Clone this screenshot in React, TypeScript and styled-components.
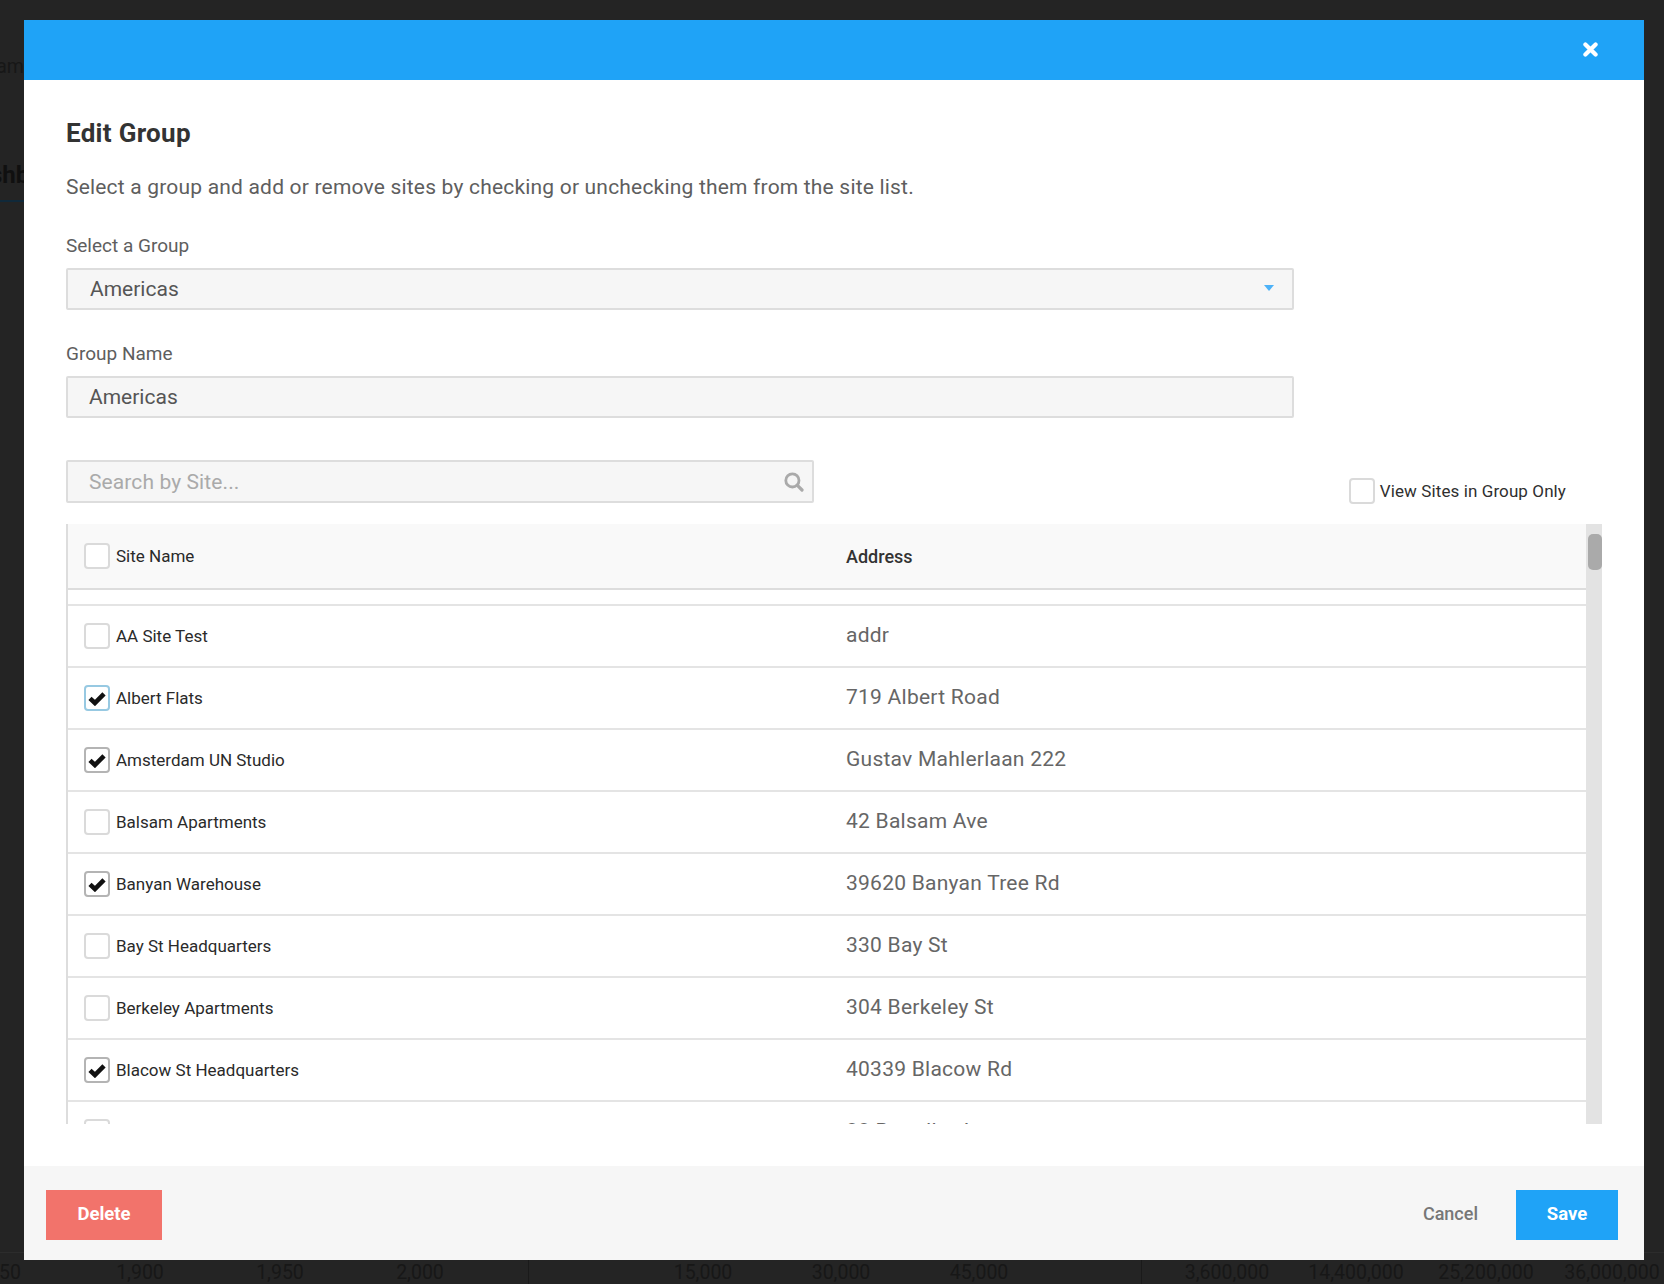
import { FC } from 'react'
import styled, { createGlobalStyle } from 'styled-components'

const GlobalStyle = createGlobalStyle`
  html, body {
    margin: 0;
    padding: 0;
    background: #242424;
    font-family: Roboto, "Liberation Sans", sans-serif;
  }
  * {
    box-sizing: border-box;
  }
`

const Page = styled.div`
  position: relative;
  width: 1664px;
  height: 1284px;
  padding: 20px 20px 24px 24px;
  overflow: hidden;
`

const BackdropText = styled.span<{ $left: number; $top: number; $bold?: boolean }>`
  position: absolute;
  left: ${(p) => p.$left}px;
  top: ${(p) => p.$top}px;
  font-size: ${(p) => (p.$bold ? 24 : 19.5)}px;
  font-weight: ${(p) => (p.$bold ? 700 : 400)};
  line-height: 24px;
  color: ${(p) => (p.$bold ? '#101010' : '#171717')};
  white-space: nowrap;
  transform: ${(p) => (p.$bold ? 'none' : 'translateX(-50%)')};
`

const BackdropLine = styled.div<{ $left: number; $top: number; $w: number; $h: number; $color: string }>`
  position: absolute;
  left: ${(p) => p.$left}px;
  top: ${(p) => p.$top}px;
  width: ${(p) => p.$w}px;
  height: ${(p) => p.$h}px;
  background: ${(p) => p.$color};
`

const Modal = styled.div`
  position: relative;
  display: flex;
  flex-direction: column;
  width: 1620px;
  height: 1240px;
  background: #fff;
`

const Header = styled.div`
  display: flex;
  align-items: center;
  justify-content: flex-end;
  flex: none;
  height: 60px;
  padding: 0 46px 1px 0;
  background: #1fa3f7;
  color: #fff;
`

const Body = styled.div`
  flex: 1;
  padding: 35px 42px 0;
`

const Title = styled.h2`
  margin: 0;
  font-size: 26px;
  line-height: 36px;
  font-weight: 700;
  letter-spacing: 0.3px;
  color: #333;
`

const Description = styled.p`
  margin: 22px 0 0;
  font-size: 21px;
  line-height: 28px;
  letter-spacing: 0.19px;
  color: #5e5e5e;
`

const Label = styled.label`
  display: block;
  font-size: 19px;
  line-height: 24px;
  color: #5e5e5e;
`

const Field = styled.div<{ $gap: number }>`
  width: 1228px;
  margin-top: ${(p) => p.$gap}px;
`

const Control = styled.div<{ $h: number; $inset: number }>`
  display: flex;
  align-items: center;
  justify-content: space-between;
  height: ${(p) => p.$h}px;
  margin-top: 10px;
  padding: 0 18px 0 ${(p) => p.$inset}px;
  background: #f6f6f6;
  border: 2px solid #ddd;
  border-radius: 2px;
  font-size: 21px;
  color: #555;
`

const Caret = styled.span`
  width: 0;
  height: 0;
  margin-top: -2px;
  border-left: 5.5px solid transparent;
  border-right: 5.5px solid transparent;
  border-top: 6px solid #4db2f8;
`

const SearchRow = styled.div`
  display: flex;
  align-items: flex-end;
  justify-content: space-between;
  margin-top: 42px;
  width: 1536px;
`

const SearchBox = styled(Control)`
  width: 748px;
  margin-top: 0;
  color: #aaa;
  padding-right: 8px;
  letter-spacing: 0.1px;
`

const ViewOnly = styled.label`
  display: flex;
  align-items: center;
  gap: 5px;
  margin-right: 36px;
  margin-bottom: -1px;
  font-size: 17px;
  letter-spacing: 0.1px;
  color: #2f2f2f;
`

const Box = styled.span<{ $state?: 'checked' | 'focus' }>`
  display: flex;
  align-items: center;
  justify-content: center;
  flex: none;
  width: 26px;
  height: 26px;
  background: #fff;
  border: 2px solid ${(p) => (p.$state === 'focus' ? '#97c9e2' : p.$state === 'checked' ? '#b4b4b4' : '#dadada')};
  border-radius: 4px;
  color: #111;
`

const TableWrap = styled.div`
  display: flex;
  height: 600px;
  margin-top: 21px;
  width: 1536px;
  overflow: hidden;
`

const Table = styled.div`
  flex: 1;
  border-left: 2px solid #ddd;
  overflow: hidden;
`

const Scrollbar = styled.div`
  flex: none;
  width: 16px;
  padding: 10px 0 0 2px;
  background: #e3e3e3;
`

const Thumb = styled.div`
  height: 36px;
  background: #aaa;
  border-radius: 5px;
`

const HeadRow = styled.div`
  display: grid;
  grid-template-columns: 778px 1fr;
  align-items: center;
  height: 66px;
  background: #f9f9f9;
  border-bottom: 2px solid #ddd;
  color: #2f2f2f;
`

const Spacer = styled.div`
  height: 16px;
  border-bottom: 2px solid #e4e4e4;
`

const Row = styled.div`
  display: grid;
  grid-template-columns: 778px 1fr;
  align-items: center;
  height: 62px;
  border-bottom: 2px solid #e4e4e4;
`

const NameCell = styled.div`
  display: flex;
  align-items: center;
  gap: 6px;
  padding-left: 16px;
  font-size: 17px;
  color: #2a2a2a;
`

const AddressHead = styled.div`
  font-weight: 500;
  font-size: 18px;
  color: #333;
`

const AddressCell = styled.div`
  padding-bottom: 2px;
  font-size: 21px;
  letter-spacing: 0.25px;
  color: #666;
`

const Footer = styled.div`
  display: flex;
  align-items: flex-start;
  flex: none;
  height: 94px;
  padding: 24px 26px 0 22px;
  background: #f6f6f6;
`

const Button = styled.button<{ $color: string; $w: number }>`
  width: ${(p) => p.$w}px;
  height: 50px;
  padding: 0 0 3px;
  border: 0;
  background: ${(p) => p.$color};
  color: #fff;
  font-family: inherit;
  font-size: 18.5px;
  font-weight: 700;
`

const CancelButton = styled.button`
  margin-left: auto;
  margin-right: 38px;
  height: 50px;
  padding: 0 0 3px;
  border: 0;
  background: transparent;
  color: #777;
  font-family: inherit;
  font-size: 18px;
  font-weight: 500;
`

const CloseIcon: FC = () => (
  <svg width="15" height="15" viewBox="0 0 15 15">
    <path d="M2.4 2.4 12.6 12.6M12.6 2.4 2.4 12.6" stroke="currentColor" strokeWidth="4.2" strokeLinecap="round" />
  </svg>
)

const CheckIcon: FC = () => (
  <svg width="18" height="15" viewBox="0 0 18 15">
    <path d="M2 7.4 6.9 12 16 2.8" fill="none" stroke="currentColor" strokeWidth="4.6" strokeLinejoin="miter" />
  </svg>
)

const SearchIcon: FC = () => (
  <svg width="20" height="20" viewBox="0 0 20 20">
    <circle cx="8.4" cy="8.4" r="6.6" fill="none" stroke="#aaa" strokeWidth="2.8" />
    <path d="M13.4 13.4 18 18" stroke="#aaa" strokeWidth="3.2" strokeLinecap="round" />
  </svg>
)

type Site = { name: string; address: string; state?: 'checked' | 'focus' }

const sites: Site[] = [
  { name: 'AA Site Test', address: 'addr' },
  { name: 'Albert Flats', address: '719 Albert Road', state: 'focus' },
  { name: 'Amsterdam UN Studio', address: 'Gustav Mahlerlaan 222', state: 'checked' },
  { name: 'Balsam Apartments', address: '42 Balsam Ave' },
  { name: 'Banyan Warehouse', address: '39620 Banyan Tree Rd', state: 'checked' },
  { name: 'Bay St Headquarters', address: '330 Bay St' },
  { name: 'Berkeley Apartments', address: '304 Berkeley St' },
  { name: 'Blacow St Headquarters', address: '40339 Blacow Rd', state: 'checked' },
  { name: 'Brandley Lofts', address: '88 Brandley Ln' },
]

const ticks: [string, number][] = [
  ['50', 10],
  ['1,900', 140],
  ['1,950', 280],
  ['2,000', 420],
  ['15,000', 703],
  ['30,000', 841],
  ['45,000', 979],
  ['3,600,000', 1227],
  ['14,400,000', 1356],
  ['25,200,000', 1486],
  ['36,000,000', 1612],
]

const Backdrop: FC = () => (
  <>
    <BackdropText $left={10} $top={55}>am</BackdropText>
    <BackdropText $left={-10} $top={163} $bold>shb</BackdropText>
    <BackdropLine $left={0} $top={200} $w={24} $h={2} $color="#10293a" />
    <BackdropLine $left={0} $top={1252} $w={1664} $h={1} $color="#2c2c2c" />
    <BackdropLine $left={528} $top={1252} $w={1} $h={32} $color="#1a1a1a" />
    <BackdropLine $left={1141} $top={1252} $w={1} $h={32} $color="#1a1a1a" />
    {ticks.map(([label, x]) => (
      <BackdropText key={label} $left={x} $top={1261}>{label}</BackdropText>
    ))}
  </>
)

const App: FC = () => (
  <Page>
    <GlobalStyle />
    <Backdrop />
    <Modal>
      <Header>
        <CloseIcon />
      </Header>
      <Body>
        <Title>Edit Group</Title>
        <Description>Select a group and add or remove sites by checking or unchecking them from the site list.</Description>
        <Field $gap={33}>
          <Label>Select a Group</Label>
          <Control $h={42} $inset={22}>
            Americas
            <Caret />
          </Control>
        </Field>
        <Field $gap={32}>
          <Label>Group Name</Label>
          <Control $h={42} $inset={21}>Americas</Control>
        </Field>
        <SearchRow>
          <SearchBox $h={43} $inset={21}>
            Search by Site...
            <SearchIcon />
          </SearchBox>
          <ViewOnly>
            <Box />
            View Sites in Group Only
          </ViewOnly>
        </SearchRow>
        <TableWrap>
          <Table>
            <HeadRow>
              <NameCell>
                <Box />
                Site Name
              </NameCell>
              <AddressHead>Address</AddressHead>
            </HeadRow>
            <Spacer />
            {sites.map((site) => (
              <Row key={site.name}>
                <NameCell>
                  <Box $state={site.state}>{site.state && <CheckIcon />}</Box>
                  {site.name}
                </NameCell>
                <AddressCell>{site.address}</AddressCell>
              </Row>
            ))}
          </Table>
          <Scrollbar>
            <Thumb />
          </Scrollbar>
        </TableWrap>
      </Body>
      <Footer>
        <Button $color="#f2736b" $w={116}>Delete</Button>
        <CancelButton>Cancel</CancelButton>
        <Button $color="#1fa3f7" $w={102}>Save</Button>
      </Footer>
    </Modal>
  </Page>
)

export default App
